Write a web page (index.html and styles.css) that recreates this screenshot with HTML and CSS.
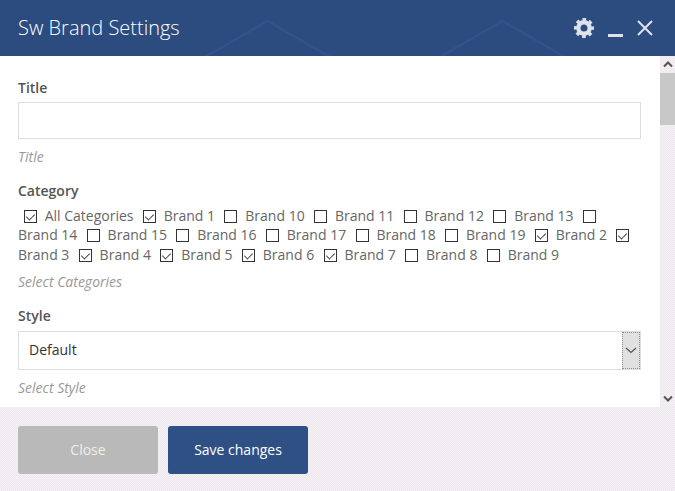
FILE: index.html
```html
<!DOCTYPE html>
<html>
<head>
  <title>Sw Brand Settings</title>
  <link rel="stylesheet" href="styles.css">
</head>
<body>
  <div class="modal">
    <header class="modal-header">
      <svg class="header-art" width="675" height="56" viewBox="0 0 675 56">
        <path d="M205 57 L267.500 21 L330 57 M440 57 L502.500 21 L565 57" fill="none" stroke="#335388" stroke-width="2.500"/>
      </svg>
      <h1 class="modal-title">Sw Brand Settings</h1>
      <div class="header-tools">
        <svg class="tool" width="20" height="20" viewBox="0 0 20 20">
          <circle cx="10" cy="10" r="5.700" fill="none" stroke="#dde2ec" stroke-width="4.400"/>
          <circle cx="10" cy="10" r="8.600" fill="none" stroke="#dde2ec" stroke-width="2.800" stroke-dasharray="3.600 3.154" stroke-dashoffset="1.800"/>
        </svg>
        <svg class="tool" width="15" height="20" viewBox="0 0 15 20"><rect y="16" width="15" height="3" fill="#dde2ec"/></svg>
        <svg class="tool" width="16" height="20" viewBox="0 0 16 20"><path d="M1 3 L15 17 M15 3 L1 17" stroke="#dde2ec" stroke-width="2"/></svg>
      </div>
    </header>

    <div class="modal-middle">
      <form class="modal-body">
        <div class="field">
          <label class="field-label">Title</label>
          <input class="text-input" type="text">
          <p class="help">Title</p>
        </div>
        <div class="field">
          <label class="field-label">Category</label>
          <div class="check-list">
            <input type="checkbox" checked> <span>All Categories</span>
            <input type="checkbox" checked> <span>Brand 1</span>
            <input type="checkbox"> <span>Brand 10</span>
            <input type="checkbox"> <span>Brand 11</span>
            <input type="checkbox"> <span>Brand 12</span>
            <input type="checkbox"> <span>Brand 13</span>
            <input type="checkbox"> <span>Brand 14</span>
            <input type="checkbox"> <span>Brand 15</span>
            <input type="checkbox"> <span>Brand 16</span>
            <input type="checkbox"> <span>Brand 17</span>
            <input type="checkbox"> <span>Brand 18</span>
            <input type="checkbox"> <span>Brand 19</span>
            <input type="checkbox" checked> <span>Brand 2</span>
            <input type="checkbox" checked> <span>Brand 3</span>
            <input type="checkbox" checked> <span>Brand 4</span>
            <input type="checkbox" checked> <span>Brand 5</span>
            <input type="checkbox" checked> <span>Brand 6</span>
            <input type="checkbox" checked> <span>Brand 7</span>
            <input type="checkbox"> <span>Brand 8</span>
            <input type="checkbox"> <span>Brand 9</span>
          </div>
          <p class="help help-tight">Select Categories</p>
        </div>
        <div class="field">
          <label class="field-label">Style</label>
          <div class="select-box">
            <span class="select-value">Default</span>
            <span class="select-arrow">
              <svg width="12" height="7" viewBox="0 0 12 7"><path d="M1 1 L6 5.500 L11 1" fill="none" stroke="#555" stroke-width="1.300"/></svg>
            </span>
          </div>
          <p class="help">Select Style</p>
        </div>
      </form>

      <div class="scrollbar">
        <div class="scroll-btn">
          <svg width="10" height="7" viewBox="0 0 10 7"><path d="M1 5.500 L5 1.500 L9 5.500" fill="none" stroke="#555" stroke-width="2"/></svg>
        </div>
        <div class="scroll-thumb"></div>
        <div class="scroll-track"></div>
        <div class="scroll-btn">
          <svg width="10" height="7" viewBox="0 0 10 7"><path d="M1 1.500 L5 5.500 L9 1.500" fill="none" stroke="#555" stroke-width="2"/></svg>
        </div>
      </div>
    </div>

    <footer class="modal-footer">
      <button class="btn btn-close" type="button">Close</button>
      <button class="btn btn-save" type="button">Save changes</button>
    </footer>
  </div>
</body>
</html>
```

FILE: styles.css
```css
html, body {
  margin: 0;
  padding: 0;
}

body {
  font-family: "Open Sans", sans-serif;
  font-size: 14px;
  line-height: 19.6px;
  color: #666;
  background-color: #fff;
}

.modal {
  display: flex;
  flex-direction: column;
  width: 675px;
  height: 491px;
  overflow: hidden;
}

/* header */
.modal-header {
  position: relative;
  display: flex;
  align-items: center;
  justify-content: space-between;
  height: 56px;
  padding: 0 22px 0 18px;
  box-sizing: border-box;
  background-color: #2c4c80;
  flex: none;
}

.header-art {
  position: absolute;
  left: 0;
  top: 0;
}

.modal-title {
  position: relative;
  margin: 0;
  font-size: 20px;
  font-weight: 300;
  color: #fff;
}

.header-tools {
  position: relative;
  display: flex;
  align-items: center;
  gap: 14px;
}

/* body */
.modal-middle {
  display: flex;
  height: 351px;
  flex: none;
}

.modal-body {
  flex: 1;
  padding: 22px 19px 0 18px;
  overflow: hidden;
}

.field {
  margin-bottom: 15px;
}

.field-label {
  display: block;
  margin-bottom: 4px;
  font-weight: 600;
  color: #555;
}

.text-input {
  display: block;
  width: 100%;
  height: 37px;
  padding: 0 10px;
  box-sizing: border-box;
  border: 1px solid #ddd;
  background: #fff;
  outline: none;
}

.help {
  margin: 8px 0 0;
  font-style: italic;
  color: #999;
}

.help-tight {
  margin-top: 7px;
}

/* checkboxes */
.check-list {
  margin-top: 5px;
}

.check-list span {
  white-space: nowrap;
}

.check-list input {
  appearance: none;
  -webkit-appearance: none;
  position: relative;
  display: inline-block;
  width: 13px;
  height: 13px;
  margin: 0 4.300px 0 5.700px;
  box-sizing: border-box;
  border: 1px solid #333;
  background: #fff;
  vertical-align: -2px;
}

.check-list input:checked::after {
  content: "";
  position: absolute;
  left: 3px;
  top: 1px;
  width: 4px;
  height: 7px;
  border: solid #444;
  border-width: 0 1.500px 1.500px 0;
  transform: rotate(45deg);
}

/* select */
.select-box {
  display: flex;
  align-items: stretch;
  height: 39px;
  margin-top: 5px;
  box-sizing: border-box;
  border: 1px solid #ddd;
  background: #fff;
}

.select-value {
  flex: 1;
  padding-left: 10px;
  line-height: 35px;
  color: #333;
}

.select-arrow {
  display: flex;
  align-items: center;
  justify-content: center;
  width: 16px;
  border: 1px dotted #8a8f86;
  background-color: #e1e1e1;
}

/* fake scrollbar */
.scrollbar {
  display: flex;
  flex-direction: column;
  width: 15px;
  flex: none;
  background-image: conic-gradient(#f5f1f5 25%, #ece8ee 0 50%, #f5f1f5 0 75%, #ece8ee 0);
  background-size: 2px 2px;
}

.scroll-btn {
  display: flex;
  align-items: center;
  justify-content: center;
  height: 17px;
  flex: none;
}

.scroll-thumb {
  height: 52px;
  flex: none;
  background-color: #c8c8c8;
}

.scroll-track {
  flex: 1;
}

/* footer */
.modal-footer {
  flex: 1;
  display: flex;
  align-items: flex-start;
  gap: 10px;
  padding: 19px 18px 0;
  background-image: conic-gradient(#f5f1f5 25%, #ece8ee 0 50%, #f5f1f5 0 75%, #ece8ee 0);
  background-size: 2px 2px;
}

.btn {
  width: 140px;
  height: 48px;
  padding: 0 0 2px;
  border: 0;
  border-radius: 3px;
  font-family: "Open Sans", sans-serif;
  font-size: 14px;
  color: #fff;
}

.btn-close {
  background-color: #b9b9b9;
  color: #efefe8;
}

.btn-save {
  background-color: #2f5085;
}
```
